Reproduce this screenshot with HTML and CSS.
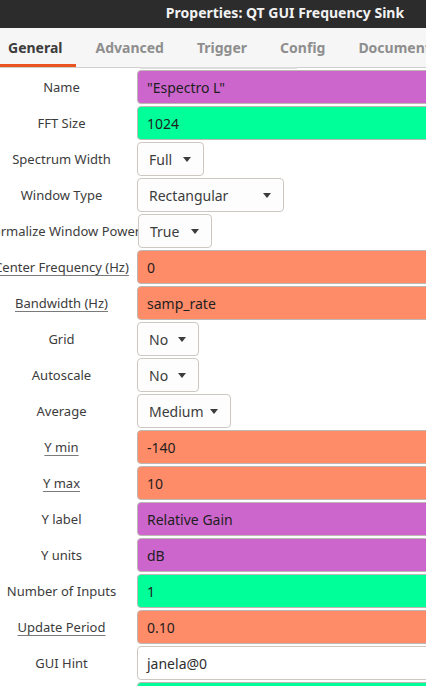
FILE: index.html
```html
<!DOCTYPE html>
<html>
<head>
<meta charset="utf-8">
<link rel="stylesheet" href="styles.css">
</head>
<body>
<div class="window">
  <header class="titlebar"><span class="title">Properties: QT GUI Frequency Sink</span></header>
  <nav class="tabs">
    <span class="tab active">General</span>
    <span class="tab">Advanced</span>
    <span class="tab">Trigger</span>
    <span class="tab">Config</span>
    <span class="tab">Documentation</span>
  </nav>
  <div class="tabline"><span class="indicator"></span></div>
  <main class="form">
    <div class="label">Name</div>
    <div class="value"><div class="entry string">"Espectro L"</div></div>

    <div class="label">FFT Size</div>
    <div class="value"><div class="entry int">1024</div></div>

    <div class="label">Spectrum Width</div>
    <div class="value"><div class="combo w-full">Full<i class="arrow"></i></div></div>

    <div class="label">Window Type</div>
    <div class="value"><div class="combo w-rect">Rectangular<i class="arrow"></i></div></div>

    <div class="label">Normalize Window Power</div>
    <div class="value"><div class="combo w-true">True<i class="arrow"></i></div></div>

    <div class="label"><u>Center Frequency (Hz)</u></div>
    <div class="value"><div class="entry float">0</div></div>

    <div class="label"><u>Bandwidth (Hz)</u></div>
    <div class="value"><div class="entry float">samp_rate</div></div>

    <div class="label">Grid</div>
    <div class="value"><div class="combo w-no">No<i class="arrow"></i></div></div>

    <div class="label">Autoscale</div>
    <div class="value"><div class="combo w-no">No<i class="arrow"></i></div></div>

    <div class="label">Average</div>
    <div class="value"><div class="combo w-medium">Medium<i class="arrow"></i></div></div>

    <div class="label"><u>Y min</u></div>
    <div class="value"><div class="entry float">-140</div></div>

    <div class="label"><u>Y max</u></div>
    <div class="value"><div class="entry float">10</div></div>

    <div class="label">Y label</div>
    <div class="value"><div class="entry string">Relative Gain</div></div>

    <div class="label">Y units</div>
    <div class="value"><div class="entry string">dB</div></div>

    <div class="label">Number of Inputs</div>
    <div class="value"><div class="entry int">1</div></div>

    <div class="label"><u>Update Period</u></div>
    <div class="value"><div class="entry float">0.10</div></div>

    <div class="label">GUI Hint</div>
    <div class="value"><div class="entry plain">janela@0</div></div>

    <div class="label">Legend</div>
    <div class="value"><div class="entry int">True</div></div>
  </main>
</div>
</body>
</html>
```
FILE: styles.css
```css
html, body {
  margin: 0;
  padding: 0;
  background: #ffffff;
  overflow: hidden;
  height: 686px;
}

.window {
  width: 570px;
  font-family: "Noto Sans", "DejaVu Sans", sans-serif;
  color: #3c3c3c;
}

.titlebar {
  height: 28px;
  background: #2c2c2c;
  display: flex;
  align-items: center;
  justify-content: center;
}

.title {
  color: #f2f2f2;
  font-weight: 700;
  font-size: 14px;
  margin-top: -4px;
}

.tabs {
  height: 39px;
  background: #f6f6f6;
  display: flex;
  align-items: stretch;
  gap: 12px;
}

.tab {
  display: flex;
  align-items: center;
  padding: 3px 13px 0 8px;
  font-size: 14px;
  font-weight: 700;
  color: #8e8e8e;
  white-space: nowrap;
  border-bottom: 3px solid transparent;
  box-sizing: border-box;
}

.tab.active {
  color: #3c3c3c;
  border-bottom-color: #e95420;
}

.tabline {
  height: 1px;
  background: #cfcfcf;
  display: flex;
  padding-left: 140px;
}

.indicator {
  width: 157px;
  height: 2px;
  background: #dcdcdc;
}

.form {
  display: grid;
  grid-template-columns: 123px 1fr;
  column-gap: 14px;
  row-gap: 2px;
  padding-top: 2px;
}

.label {
  height: 34px;
  display: flex;
  align-items: center;
  justify-content: center;
  white-space: nowrap;
  font-size: 13px;
  color: #3c3c3c;
}

.label u {
  text-decoration-color: #7a7a7a;
  text-underline-offset: 3px;
}

.value {
  display: flex;
  align-items: center;
  height: 34px;
}

.entry {
  flex: 1;
  height: 34px;
  box-sizing: border-box;
  border: 1px solid #bdb8b3;
  border-radius: 4px;
  padding: 0 9px;
  display: flex;
  align-items: center;
  font-size: 14px;
  color: #1e1e1e;
  white-space: nowrap;
}

.entry.string { background: #cc66cc; }
.entry.int { background: #00ff99; }
.entry.float { background: #ff8c69; }
.entry.plain { background: #ffffff; border-color: #cdc7c2; color: #2e2e2e; }

.combo {
  height: 34px;
  box-sizing: border-box;
  border: 1px solid #cdc7c2;
  border-radius: 4px;
  background: #fdfdfd;
  padding: 0 12px 0 11px;
  display: flex;
  align-items: center;
  justify-content: space-between;
  font-size: 14px;
  color: #3c3c3c;
  white-space: nowrap;
}

.arrow {
  width: 0;
  height: 0;
  border-left: 4.5px solid transparent;
  border-right: 4.5px solid transparent;
  border-top: 5px solid #3c3c3c;
  margin-top: 1px;
}

.w-full { width: 67px; }
.w-rect { width: 147px; }
.w-true { width: 74px; margin-left: 1px; }
.w-no { width: 62px; }
.w-medium { width: 94px; }
```
